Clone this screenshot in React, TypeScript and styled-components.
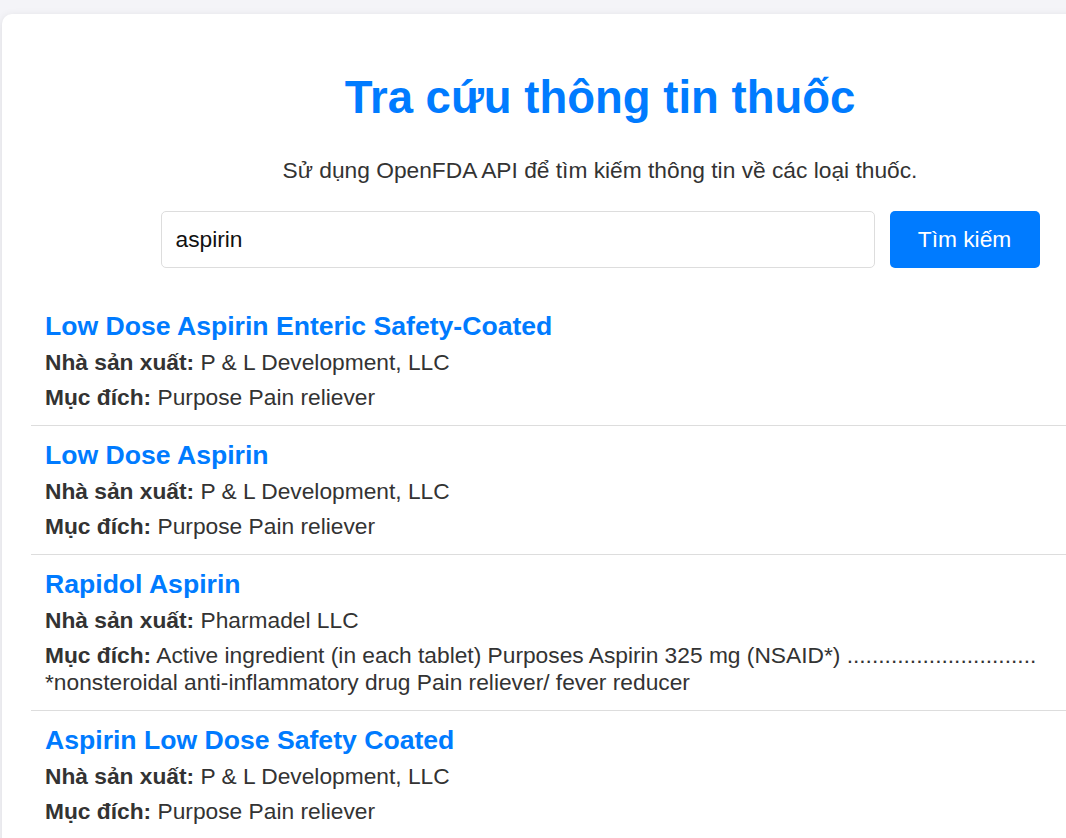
import React from "react";
import styled, { createGlobalStyle } from "styled-components";

const GlobalStyle = createGlobalStyle`
  html, body {
    margin: 0;
    padding: 0;
    overflow: hidden;
    background: #f4f4f8;
    font-family: "Liberation Sans", Arial, sans-serif;
    color: #333;
  }
`;

const Card = styled.main`
  box-sizing: border-box;
  width: 1196px;
  margin: 14px 0 0 2px;
  padding: 28px 29px 30px;
  background: #fff;
  border-radius: 10px;
  box-shadow: 0 2px 8px rgba(0, 0, 0, 0.1);
`;

const Title = styled.h1`
  margin: 29px 0 0;
  text-align: center;
  color: #007bff;
  font-size: 45.5px;
  line-height: 53px;
  font-weight: 700;
`;

const Subtitle = styled.p`
  margin: 33px 0 0;
  text-align: center;
  font-size: 22.75px;
  line-height: 27px;
  color: #333;
`;

const SearchForm = styled.form`
  display: flex;
  gap: 15px;
  width: 879px;
  margin: 27px auto 0;
`;

const SearchInput = styled.input`
  flex: 1;
  box-sizing: border-box;
  height: 57px;
  padding: 0 14px;
  border: 1px solid #ddd;
  border-radius: 5px;
  font-family: inherit;
  font-size: 22.75px;
  color: #111;
  outline: none;
`;

const SearchButton = styled.button`
  width: 150px;
  height: 57px;
  border: none;
  border-radius: 5px;
  background: #007bff;
  color: #fff;
  font-family: inherit;
  font-size: 22.75px;
  cursor: pointer;
`;

const ResultList = styled.ul`
  list-style: none;
  margin: 29px 0 0;
  padding: 0;
`;

const ResultItem = styled.li`
  padding: 15px 14px 14px;
  border-bottom: 1px solid #ddd;
`;

const DrugName = styled.h3`
  margin: 0 0 9px;
  color: #007bff;
  font-size: 26.6px;
  line-height: 28px;
  font-weight: 700;
`;

const Info = styled.p`
  margin: 0;
  font-size: 22.75px;
  line-height: 27px;
  color: #333;
  & + & {
    margin-top: 8px;
  }
`;

const Label = styled.strong`
  font-weight: 700;
`;

const results = [
  {
    name: "Low Dose Aspirin Enteric Safety-Coated",
    maker: "P & L Development, LLC",
    purpose: "Purpose Pain reliever",
  },
  {
    name: "Low Dose Aspirin",
    maker: "P & L Development, LLC",
    purpose: "Purpose Pain reliever",
  },
  {
    name: "Rapidol Aspirin",
    maker: "Pharmadel LLC",
    purpose:
      "Active ingredient (in each tablet) Purposes Aspirin 325 mg (NSAID*) .............................. *nonsteroidal anti-inflammatory drug Pain reliever/ fever reducer",
  },
  {
    name: "Aspirin Low Dose Safety Coated",
    maker: "P & L Development, LLC",
    purpose: "Purpose Pain reliever",
  },
  {
    name: "Aspirin",
    maker: "P & L Development, LLC",
    purpose: "Purpose Pain reliever",
  },
];

export default function App() {
  return (
    <>
      <GlobalStyle />
      <Card>
        <Title>Tra cứu thông tin thuốc</Title>
        <Subtitle>Sử dụng OpenFDA API để tìm kiếm thông tin về các loại thuốc.</Subtitle>
        <SearchForm onSubmit={(e) => e.preventDefault()}>
          <SearchInput defaultValue="aspirin" />
          <SearchButton type="submit">Tìm kiếm</SearchButton>
        </SearchForm>
        <ResultList>
          {results.map((r, i) => (
            <ResultItem key={i}>
              <DrugName>{r.name}</DrugName>
              <Info>
                <Label>Nhà sản xuất:</Label> {r.maker}
              </Info>
              <Info>
                <Label>Mục đích:</Label> {r.purpose}
              </Info>
            </ResultItem>
          ))}
        </ResultList>
      </Card>
    </>
  );
}
